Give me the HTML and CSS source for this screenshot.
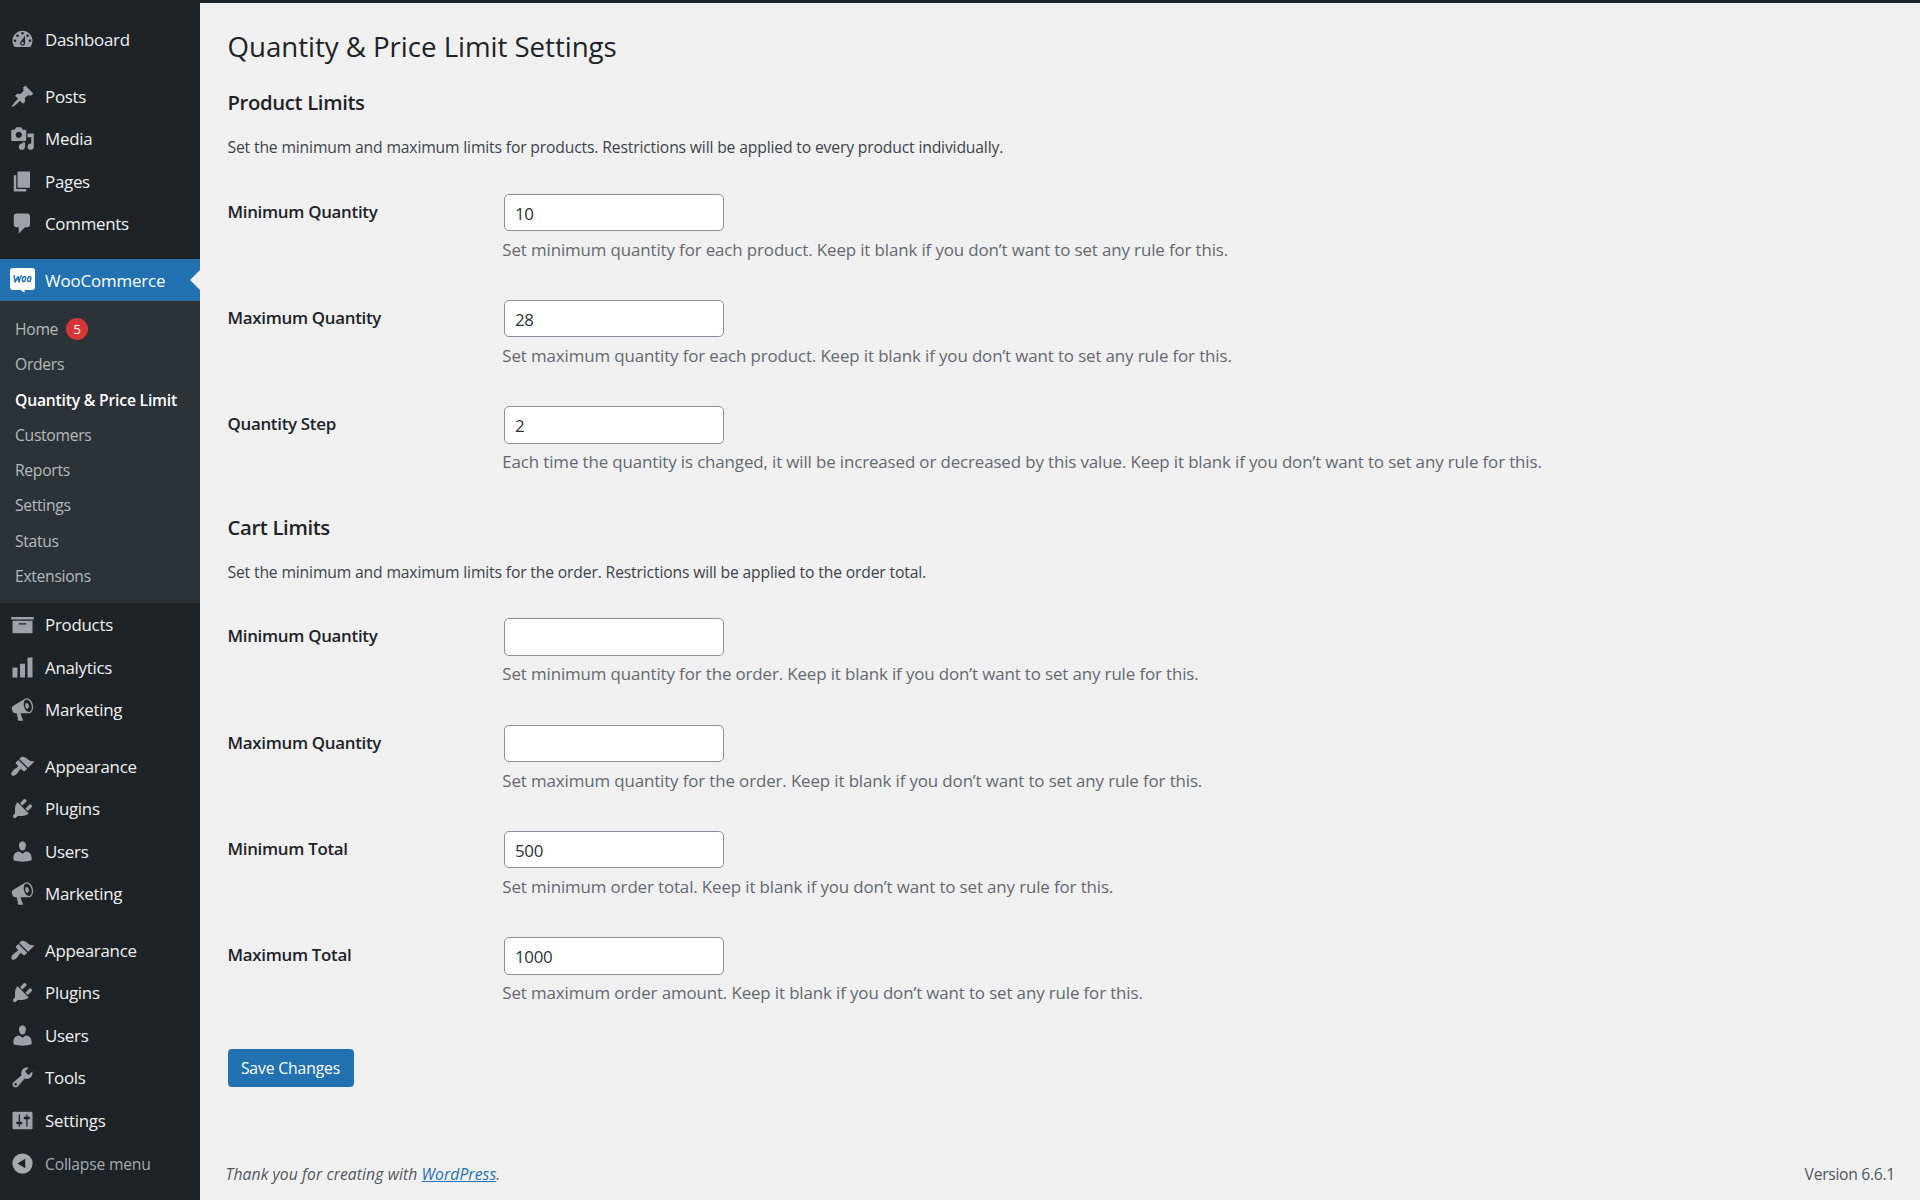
FILE: index.html
```
<!DOCTYPE html>
<html lang="en">
<head>
<meta charset="utf-8">
<title>Quantity &amp; Price Limit Settings</title>
<link rel="stylesheet" href="styles.css">
</head>
<body>
<svg class="sprite" aria-hidden="true">
  <symbol id="i-dashboard" viewBox="0 0 20 20"><path d="M3.76 16h12.48c1.1-1.37 1.76-3.11 1.76-5 0-4.42-3.58-8-8-8s-8 3.58-8 8c0 1.89.66 3.63 1.76 5zM10 4c.55 0 1 .45 1 1s-.45 1-1 1-1-.45-1-1 .45-1 1-1zM6 6c.55 0 1 .45 1 1s-.45 1-1 1-1-.45-1-1 .45-1 1-1zm8 0c.55 0 1 .45 1 1s-.45 1-1 1-1-.45-1-1 .45-1 1-1zm-5.37 5.55L12 7v6c0 1.1-.9 2-2 2s-2-.9-2-2c0-.57.24-1.08.63-1.45zM4 10c.55 0 1 .45 1 1s-.45 1-1 1-1-.45-1-1 .45-1 1-1zm12 0c.55 0 1 .45 1 1s-.45 1-1 1-1-.45-1-1 .45-1 1-1zm-5 3c0-.55-.45-1-1-1s-1 .45-1 1 .45 1 1 1 1-.45 1-1z" fill-rule="evenodd"/></symbol>
  <symbol id="i-post" viewBox="0 0 20 20"><path d="M10.44 3.02l1.82-1.82 6.36 6.35-1.83 1.82c-1.05-.68-2.48-.57-3.41.36l-.75.75c-.92.93-1.04 2.35-.35 3.41l-1.83 1.82-2.41-2.41-2.8 2.79c-.42.42-3.38 2.71-3.8 2.29s1.86-3.39 2.28-3.81l2.79-2.79L4.1 9.36l1.83-1.82c1.05.69 2.48.57 3.4-.36l.75-.75c.93-.92 1.05-2.35.36-3.41z"/></symbol>
  <symbol id="i-media" viewBox="0 0 20 20"><path fill-rule="evenodd" d="M13 11V4c0-.55-.45-1-1-1h-1.67L9 1H5L3.67 3H2c-.55 0-1 .45-1 1v7c0 .55.45 1 1 1h10c.55 0 1-.45 1-1zM7 4.5c1.38 0 2.5 1.12 2.5 2.5S8.38 9.5 7 9.5 4.5 8.38 4.5 7 5.62 4.5 7 4.5zM14 6h5v10.5c0 1.38-1.12 2.5-2.5 2.5S14 17.88 14 16.5s1.12-2.5 2.5-2.5c.17 0 .34.02.5.05V9h-3V6zm-4 8.05V13h2v3.5c0 1.38-1.12 2.5-2.5 2.5S7 17.88 7 16.5 8.12 14 9.5 14c.17 0 .34.02.5.05z"/></symbol>
  <symbol id="i-page" viewBox="0 0 20 20"><path d="M6 15V2h10v13H6zm-1 1h8v2H3V5h2v11z"/></symbol>
  <symbol id="i-comments" viewBox="0 0 20 20"><path d="M5 2h9c1.1 0 2 .9 2 2v7c0 1.1-.9 2-2 2h-2l-5 5v-5H5c-1.1 0-2-.9-2-2V4c0-1.1.9-2 2-2z"/></symbol>
  <symbol id="i-archive" viewBox="0 0 20 20"><path fill-rule="evenodd" d="M19 4v2H1V4h18zM2 7h16v10H2V7zm11 3V9H7v1h6z"/></symbol>
  <symbol id="i-chart" viewBox="0 0 20 20"><path d="M18 18V2h-4v16h4zm-6 0V7H8v11h4zm-6 0v-8H2v8h4z"/></symbol>
  <symbol id="i-megaphone" viewBox="0 0 20 20"><path fill-rule="evenodd" d="M18.15 5.94c.46 1.62.38 3.22-.02 4.48-.42 1.28-1.26 2.18-2.3 2.48-.16.06-.26.06-.4.06-.06.02-.12.02-.18.02-.06.02-.14.02-.22.02h-6.8l2.22 5.5c.02.14-.06.26-.14.34-.08.1-.24.16-.34.16H6.95c-.1 0-.26-.06-.34-.16-.08-.08-.16-.2-.14-.34l-1-5.5H4.25l-.02-.02c-.5.06-1.08-.18-1.54-.62s-.88-1.08-1.06-1.88c-.24-.8-.2-1.56-.02-2.2.18-.62.58-1.08 1.06-1.3l.02-.02 9-5.4c.1-.06.18-.1.24-.16.06-.04.14-.08.24-.12.16-.08.28-.12.5-.18 1.04-.3 2.24.1 3.22.98s1.84 2.24 2.26 3.86zm-2.58 5.98h-.02c.4-.1.74-.34 1.04-.7.58-.7.86-1.76.86-3.04 0-.64-.1-1.3-.28-1.98-.34-1.36-1.02-2.5-1.78-3.24s-1.68-1.1-2.46-.88c-.82.22-1.4.96-1.7 2-.32 1.04-.28 2.36.06 3.72.38 1.36 1 2.5 1.8 3.24.78.74 1.62 1.1 2.48.88zm-2.54-7.08c.22-.04.42-.02.62.04.38.16.76.48 1.02 1s.42 1.2.42 1.78c0 .3-.04.56-.12.8-.18.48-.44.84-.86.94-.34.1-.8-.06-1.14-.4s-.64-.86-.78-1.5c-.18-.62-.12-1.24.02-1.72s.48-.84.82-.94z"/></symbol>
  <symbol id="i-appearance" viewBox="0 0 20 20"><path d="M14.48 11.06L7.41 3.99l1.5-1.5c.5-.56 2.3-.47 3.51.32 1.21.8 1.43 1.28 2.91 2.1 1.18.64 2.45 1.26 4.45.85zm-.71.71L6.7 4.7 4.93 6.47c-.39.39-.39 1.02 0 1.41l1.06 1.06c.39.39.39 1.03 0 1.42-.6.6-1.43 1.11-2.21 1.69-.35.26-.7.53-1.01.84C1.43 14.23.4 16.08 1.4 17.07c.99 1 2.84-.03 4.18-1.36.31-.31.58-.66.85-1.02.57-.78 1.08-1.61 1.69-2.21.39-.39 1.02-.39 1.41 0l1.06 1.06c.39.39 1.02.39 1.41 0z"/></symbol>
  <symbol id="i-plugins" viewBox="0 0 20 20"><path d="M13.11 4.36L9.87 7.6 8 5.73l3.24-3.24c.35-.34 1.05-.2 1.56.32.52.51.66 1.21.31 1.55zm-8 1.77l.91-1.12 9.01 9.01-1.19.84c-.71.71-2.63 1.16-3.82 1.16H6.14L4.9 17.26c-.59.59-1.54.59-2.12 0-.59-.58-.59-1.53 0-2.12l1.24-1.24v-3.88c0-1.13.4-3.19 1.09-3.89zm7.26 3.97l3.24-3.24c.34-.35 1.04-.21 1.55.31.52.51.66 1.21.31 1.55l-3.24 3.25z"/></symbol>
  <symbol id="i-users" viewBox="0 0 20 20"><path d="M10 9.25c-2.27 0-2.73-3.44-2.73-3.44C7 4.02 7.82 2 9.97 2c2.16 0 2.98 2.02 2.71 3.81 0 0-.41 3.44-2.68 3.44zm0 2.57L12.72 10c2.39 0 4.52 2.33 4.52 4.53v2.49s-3.65 1.13-7.24 1.13c-3.65 0-7.24-1.13-7.24-1.13v-2.49c0-2.25 1.94-4.48 4.47-4.48z"/></symbol>
  <symbol id="i-tools" viewBox="0 0 20 20"><path fill-rule="evenodd" d="M16.68 9.77c-1.34 1.34-3.3 1.67-4.95.99l-5.41 6.52c-.99.99-2.59.99-3.58 0s-.99-2.59 0-3.57l6.52-5.42c-.68-1.65-.35-3.61.99-4.95 1.28-1.28 3.12-1.62 4.72-1.06l-2.89 2.89 2.82 2.82 2.86-2.87c.53 1.58.18 3.39-1.08 4.65zM3.81 16.21c.4.39 1.04.39 1.43 0 .4-.4.4-1.04 0-1.43-.39-.4-1.03-.4-1.43 0-.39.39-.39 1.03 0 1.43z"/></symbol>
  <symbol id="i-settings" viewBox="0 0 20 20"><path fill-rule="evenodd" d="M18 16V4c0-.55-.45-1-1-1H3c-.55 0-1 .45-1 1v12c0 .55.45 1 1 1h14c.55 0 1-.45 1-1zM8 11h1c.55 0 1 .45 1 1s-.45 1-1 1H8v1.5c0 .28-.22.5-.5.5s-.5-.22-.5-.5V13H6c-.55 0-1-.45-1-1s.45-1 1-1h1V5.500c0-.28.22-.5.5-.5s.5.22.5.5V11zm5-2h-1c-.55 0-1-.45-1-1s.45-1 1-1h1V5.500c0-.28.22-.5.5-.5s.5.22.5.5V7h1c.55 0 1 .45 1 1s-.45 1-1 1h-1v5.500c0 .28-.22.5-.5.5s-.5-.22-.5-.5V9z"/></symbol>
  <symbol id="i-collapse" viewBox="0 0 20 20"><path fill-rule="evenodd" d="M10 1.900a8.100 8.100 0 1 0 0 16.200 8.100 8.100 0 0 0 0-16.200zM12.200 6.200v7.600L6 10z"/></symbol>
  <symbol id="i-woo" viewBox="0 0 25 25"><path fill="#fff" d="M3 0h19a3 3 0 0 1 3 3v16a3 3 0 0 1-3 3h-7.500v2.700L10.600 22H3a3 3 0 0 1-3-3V3a3 3 0 0 1 3-3z"/><g fill="none" stroke="#2271b1" stroke-width="1.500" stroke-linecap="round" stroke-linejoin="round"><path d="M4.100 7.800L5.200 14 8 8.600 9.100 14c.4-2.700 1-4.600 2.300-6.200"/><ellipse cx="14" cy="11" rx="1.500" ry="2.500" transform="rotate(14 14 11)"/><ellipse cx="19.200" cy="11" rx="1.500" ry="2.500" transform="rotate(14 19.200 11)"/></g></symbol>
</svg>
<div class="topbar"></div>
<div class="admin">
  <nav class="sidebar">
    <ul class="menu">
      <li class="item"><svg class="icon"><use href="#i-dashboard"/></svg><span>Dashboard</span></li>
      <li class="separator"></li>
      <li class="item"><svg class="icon"><use href="#i-post"/></svg><span>Posts</span></li>
      <li class="item"><svg class="icon"><use href="#i-media"/></svg><span>Media</span></li>
      <li class="item"><svg class="icon"><use href="#i-page"/></svg><span>Pages</span></li>
      <li class="item"><svg class="icon"><use href="#i-comments"/></svg><span>Comments</span></li>
      <li class="separator"></li>
      <li class="item current"><svg class="icon"><use href="#i-woo"/></svg><span>WooCommerce</span></li>
    </ul>
    <ul class="submenu">
      <li class="sub">Home <span class="count">5</span></li>
      <li class="sub">Orders</li>
      <li class="sub active">Quantity &amp; Price Limit</li>
      <li class="sub">Customers</li>
      <li class="sub">Reports</li>
      <li class="sub">Settings</li>
      <li class="sub">Status</li>
      <li class="sub">Extensions</li>
    </ul>
    <ul class="menu">
      <li class="item"><svg class="icon"><use href="#i-archive"/></svg><span>Products</span></li>
      <li class="item"><svg class="icon"><use href="#i-chart"/></svg><span>Analytics</span></li>
      <li class="item"><svg class="icon"><use href="#i-megaphone"/></svg><span>Marketing</span></li>
      <li class="separator"></li>
      <li class="item"><svg class="icon"><use href="#i-appearance"/></svg><span>Appearance</span></li>
      <li class="item"><svg class="icon"><use href="#i-plugins"/></svg><span>Plugins</span></li>
      <li class="item"><svg class="icon"><use href="#i-users"/></svg><span>Users</span></li>
      <li class="item"><svg class="icon"><use href="#i-megaphone"/></svg><span>Marketing</span></li>
      <li class="separator"></li>
      <li class="item"><svg class="icon"><use href="#i-appearance"/></svg><span>Appearance</span></li>
      <li class="item"><svg class="icon"><use href="#i-plugins"/></svg><span>Plugins</span></li>
      <li class="item"><svg class="icon"><use href="#i-users"/></svg><span>Users</span></li>
      <li class="item"><svg class="icon"><use href="#i-tools"/></svg><span>Tools</span></li>
      <li class="item"><svg class="icon"><use href="#i-settings"/></svg><span>Settings</span></li>
      <li class="item collapse"><svg class="icon"><use href="#i-collapse"/></svg><span>Collapse menu</span></li>
    </ul>
  </nav>
  <main class="content">
    <h1 class="title">Quantity &amp; Price Limit Settings</h1>
    <section class="section">
      <h2 class="heading">Product Limits</h2>
      <p class="intro">Set the minimum and maximum limits for products. Restrictions will be applied to every product individually.</p>
      <div class="row">
        <label class="label" for="pmin">Minimum Quantity</label>
        <div class="field"><input class="input" id="pmin" type="text" value="10"><p class="help">Set minimum quantity for each product. Keep it blank if you don’t want to set any rule for this.</p></div>
      </div>
      <div class="row">
        <label class="label" for="pmax">Maximum Quantity</label>
        <div class="field"><input class="input" id="pmax" type="text" value="28"><p class="help">Set maximum quantity for each product. Keep it blank if you don’t want to set any rule for this.</p></div>
      </div>
      <div class="row">
        <label class="label" for="pstep">Quantity Step</label>
        <div class="field"><input class="input" id="pstep" type="text" value="2"><p class="help">Each time the quantity is changed, it will be increased or decreased by this value. Keep it blank if you don’t want to set any rule for this.</p></div>
      </div>
    </section>
    <section class="section">
      <h2 class="heading">Cart Limits</h2>
      <p class="intro">Set the minimum and maximum limits for the order. Restrictions will be applied to the order total.</p>
      <div class="row">
        <label class="label" for="cmin">Minimum Quantity</label>
        <div class="field"><input class="input" id="cmin" type="text" value=""><p class="help">Set minimum quantity for the order. Keep it blank if you don’t want to set any rule for this.</p></div>
      </div>
      <div class="row">
        <label class="label" for="cmax">Maximum Quantity</label>
        <div class="field"><input class="input" id="cmax" type="text" value=""><p class="help">Set maximum quantity for the order. Keep it blank if you don’t want to set any rule for this.</p></div>
      </div>
      <div class="row">
        <label class="label" for="tmin">Minimum Total</label>
        <div class="field"><input class="input" id="tmin" type="text" value="500"><p class="help">Set minimum order total. Keep it blank if you don’t want to set any rule for this.</p></div>
      </div>
      <div class="row">
        <label class="label" for="tmax">Maximum Total</label>
        <div class="field"><input class="input" id="tmax" type="text" value="1000"><p class="help">Set maximum order amount. Keep it blank if you don’t want to set any rule for this.</p></div>
      </div>
    </section>
    <button class="save" type="button">Save Changes</button>
    <footer class="footer">
      <p class="thanks">Thank you for creating with <a class="link" href="#">WordPress</a>.</p>
      <p class="version">Version 6.6.1</p>
    </footer>
  </main>
</div>
</body>
</html>
```
FILE: styles.css
```
* { box-sizing: border-box; }

body {
  margin: 0;
  height: 1200px;
  display: flex;
  flex-direction: column;
  overflow: hidden;
  background: #f0f0f1;
  color: #3c434a;
  font-family: "Segoe UI", "Open Sans", "Noto Sans", sans-serif;
  font-size: 15.7px;
}

h1, h2, p, ul { margin: 0; padding: 0; }
ul { list-style: none; }
.sprite { display: none; }

.topbar { flex: none; height: 3px; background: #1d2327; }
.admin { flex: 1; display: flex; min-height: 0; }

/* Sidebar */
.sidebar { flex: none; width: 200px; padding-top: 15.3px; background: #1d2327; }

.item {
  position: relative;
  display: flex;
  align-items: center;
  gap: 10px;
  height: 42.5px;
  padding-left: 10px;
  color: #f0f0f1;
  font-size: 16.9px;
  letter-spacing: -0.27px;
  white-space: nowrap;
}
.icon { flex: none; width: 25px; height: 25px; fill: #9ca2a7; }
.separator { height: 14px; }

.current { background: #2271b1; color: #fff; letter-spacing: -0.15px; }
.current::after {
  content: "";
  position: absolute;
  right: 0;
  top: 11px;
  border: 10px solid transparent;
  border-left-width: 0;
  border-right-color: #f0f0f1;
}

.submenu { height: 301.5px; padding-top: 10px; background: #2c3338; }
.submenu + .menu { padding-top: 0.6px; }
.sub {
  display: flex;
  align-items: center;
  gap: 8px;
  height: 35.3px;
  padding-left: 15px;
  color: #b4b9be;
  font-size: 15.7px;
  letter-spacing: -0.31px;
  white-space: nowrap;
}
.active { color: #fff; font-weight: 600; letter-spacing: -0.2px; }
.count {
  width: 22px;
  height: 22.5px;
  border-radius: 11.25px;
  background: #d63638;
  color: #fff;
  font-size: 13.5px;
  line-height: 22.5px;
  letter-spacing: 0;
  text-align: center;
}
.collapse { margin-top: 1px; color: #a7aaad; font-size: 15.7px; letter-spacing: -0.22px; }
.collapse .icon { fill: #a7aaad; }

/* Settings page */
.content {
  flex: 1;
  display: flex;
  flex-direction: column;
  align-items: flex-start;
  padding: 23px 25px 0 27.5px;
}
.title {
  height: 40px;
  color: #1d2327;
  font-size: 27.7px;
  font-weight: 400;
  line-height: 40px;
  letter-spacing: -0.05px;
}
.section { width: 100%; }
.heading {
  margin-top: 21px;
  height: 30px;
  color: #1d2327;
  font-size: 20.3px;
  font-weight: 600;
  line-height: 30px;
  letter-spacing: -0.35px;
}
.intro { margin: 18px 0 34.5px; line-height: 24px; letter-spacing: -0.155px; }

.row { display: flex; height: 106.25px; }
.label {
  width: 276.5px;
  padding-top: 5px;
  color: #1d2327;
  font-size: 16.9px;
  font-weight: 600;
  line-height: 26px;
  letter-spacing: -0.3px;
}
.input {
  display: block;
  width: 220px;
  height: 37.5px;
  padding: 2px 10px 0;
  border: 1px solid #8c8f94;
  border-radius: 5px;
  background: #fff;
  color: #2c3338;
  font-family: inherit;
  font-size: 16.9px;
  letter-spacing: -0.3px;
}
.help {
  margin: 5.6px 0 0 -1.7px;
  color: #646970;
  font-size: 16.9px;
  line-height: 26px;
  letter-spacing: -0.12px;
  white-space: nowrap;
}
.section + .section .heading { margin-top: -0.5px; }
.section + .section .intro { margin-top: 18px; }
.save {
  width: 126px;
  height: 38px;
  margin-top: 5.5px;
  padding: 0;
  border: 0;
  border-radius: 4px;
  background: #2271b1;
  color: #fff;
  font-family: inherit;
  font-size: 15.7px;
  letter-spacing: -0.12px;
}
.footer {
  display: flex;
  justify-content: space-between;
  align-self: stretch;
  margin: 75px 0 0 -2px;
  color: #50575e;
  line-height: 24px;
  letter-spacing: -0.3px;
}
.thanks { font-style: italic; letter-spacing: 0.09px; }
.link { color: #2271b1; }
```
